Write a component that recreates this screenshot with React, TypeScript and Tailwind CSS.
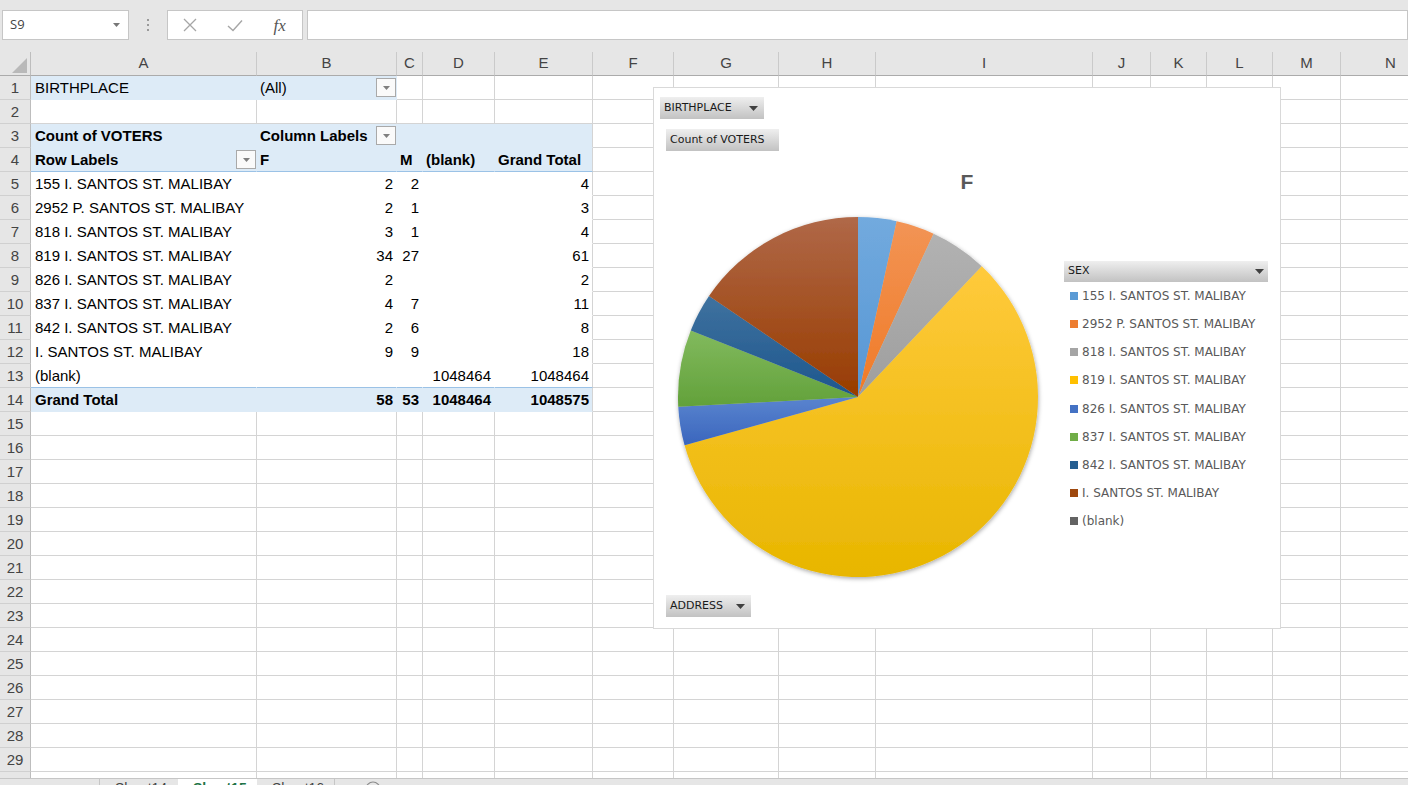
import React from 'react';

type ColDef = { k: string; w: string };
const COLS: ColDef[] = [
  { k: 'A', w: 'w-[226px]' },
  { k: 'B', w: 'w-[140px]' },
  { k: 'C', w: 'w-[26px]' },
  { k: 'D', w: 'w-[72px]' },
  { k: 'E', w: 'w-[98px]' },
  { k: 'F', w: 'w-[81px]' },
  { k: 'G', w: 'w-[105px]' },
  { k: 'H', w: 'w-[97px]' },
  { k: 'I', w: 'w-[217px]' },
  { k: 'J', w: 'w-[58px]' },
  { k: 'K', w: 'w-[56px]' },
  { k: 'L', w: 'w-[66px]' },
  { k: 'M', w: 'w-[68px]' },
  { k: 'N', w: 'w-[100px]' },
];

const PIVOT: string[][] = [
  ['155 I. SANTOS ST. MALIBAY', '2', '2', '', '4'],
  ['2952 P. SANTOS ST. MALIBAY', '2', '1', '', '3'],
  ['818 I. SANTOS ST. MALIBAY', '3', '1', '', '4'],
  ['819 I. SANTOS ST. MALIBAY', '34', '27', '', '61'],
  ['826 I. SANTOS ST. MALIBAY', '2', '', '', '2'],
  ['837 I. SANTOS ST. MALIBAY', '4', '7', '', '11'],
  ['842 I. SANTOS ST. MALIBAY', '2', '6', '', '8'],
  ['I. SANTOS ST. MALIBAY', '9', '9', '', '18'],
  ['(blank)', '', '', '1048464', '1048464'],
];
const TOTAL = ['Grand Total', '58', '53', '1048464', '1048575'];
const HEAD4 = ['Row Labels', 'F', 'M', '(blank)', 'Grand Total'];

const LEGEND = [
  { label: '155 I. SANTOS ST. MALIBAY', sq: 'bg-[#5b9bd5]' },
  { label: '2952 P. SANTOS ST. MALIBAY', sq: 'bg-[#ed7d31]' },
  { label: '818 I. SANTOS ST. MALIBAY', sq: 'bg-[#a5a5a5]' },
  { label: '819 I. SANTOS ST. MALIBAY', sq: 'bg-[#ffc000]' },
  { label: '826 I. SANTOS ST. MALIBAY', sq: 'bg-[#4472c4]' },
  { label: '837 I. SANTOS ST. MALIBAY', sq: 'bg-[#70ad47]' },
  { label: '842 I. SANTOS ST. MALIBAY', sq: 'bg-[#255e91]' },
  { label: 'I. SANTOS ST. MALIBAY', sq: 'bg-[#9e480e]' },
  { label: '(blank)', sq: 'bg-[#636363]' },
];

const SLICES: { v: number; top: string; bot: string }[] = [
  { v: 2, top: '#72aade', bot: '#5696d4' },
  { v: 2, top: '#f29455', bot: '#f07a26' },
  { v: 3, top: '#b2b2b2', bot: '#9e9e9e' },
  { v: 34, top: '#ffca3c', bot: '#e8b600' },
  { v: 2, top: '#5a84cf', bot: '#3a66bd' },
  { v: 4, top: '#82ba5e', bot: '#62a13a' },
  { v: 2, top: '#3f729f', bot: '#1d568d' },
  { v: 9, top: '#b06848', bot: '#983c00' },
];

function DD() {
  return (
    <div className="w-[20px] h-[19px] shrink-0 border border-[#a9a9a9] bg-[#fafafa] flex items-center justify-center">
      <svg width="7" height="4" viewBox="0 0 7 4">
        <polygon points="0,0 7,0 3.5,4" fill="#7f7f7f" />
      </svg>
    </div>
  );
}

function Tri({ color = '#404040' }: { color?: string }) {
  return (
    <svg width="9" height="5" viewBox="0 0 9 5" className="shrink-0">
      <polygon points="0,0 9,0 4.5,5" fill={color} />
    </svg>
  );
}

function TopBar() {
  return (
    <div className="h-[52px] shrink-0 bg-[#e6e6e6] flex items-start pt-[10px]">
      <div className="ml-[2px] w-[127px] h-[30px] bg-white border border-[#c6c6c6] flex items-center justify-between pl-[7px] pr-[8px]">
        <span className="text-[13px] text-[#444] font-['Open_Sans',sans-serif]">S9</span>
        <svg width="7" height="4" viewBox="0 0 7 4">
          <polygon points="0,0 7,0 3.5,4" fill="#777" />
        </svg>
      </div>
      <div className="w-[38px] h-[30px] flex flex-col items-center justify-center gap-[3px]">
        <div className="w-[2px] h-[2px] bg-[#9a9a9a]" />
        <div className="w-[2px] h-[2px] bg-[#9a9a9a]" />
        <div className="w-[2px] h-[2px] bg-[#9a9a9a]" />
      </div>
      <div className="w-[136px] h-[30px] bg-white border border-[#c6c6c6] flex items-center">
        <div className="w-[45px] flex justify-center">
          <svg width="14" height="14" viewBox="0 0 14 14">
            <path d="M1 1 L13 13 M13 1 L1 13" stroke="#a6a6a6" strokeWidth="1.3" fill="none" />
          </svg>
        </div>
        <div className="w-[45px] flex justify-center">
          <svg width="16" height="13" viewBox="0 0 16 13">
            <path d="M1 7 L6 11.5 L15 1.5" stroke="#a6a6a6" strokeWidth="1.4" fill="none" />
          </svg>
        </div>
        <div className="w-[45px] flex justify-center">
          <span className="text-[17px] italic text-[#555] font-['Liberation_Serif',serif] leading-none">fx</span>
        </div>
      </div>
      <div className="ml-[4px] flex-1 h-[30px] bg-white border border-[#c6c6c6]" />
    </div>
  );
}

function ColHeader() {
  return (
    <div className="flex h-[24px] shrink-0 bg-[#e6e6e6]">
      <div className="w-[31px] shrink-0 flex items-end justify-end pr-[3px] pb-[2px] border-r border-r-[#bdbdbd] border-b border-b-[#ababab]">
        <svg width="15" height="15" viewBox="0 0 15 15">
          <polygon points="15,0 15,15 0,15" fill="#b9b9b9" />
        </svg>
      </div>
      {COLS.map((c) => (
        <div
          key={c.k}
          className={`${c.w} shrink-0 flex items-center justify-center border-r border-r-[#cacaca] border-b border-b-[#ababab] text-[15px] text-[#444]`}
        >
          {c.k}
        </div>
      ))}
    </div>
  );
}

function Cell({ n, i, w }: { n: number; i: number; w: string }) {
  let bg = 'bg-white';
  let br = 'border-r-[#d4d4d4]';
  let bb = 'border-b-[#d4d4d4]';
  let content: React.ReactNode = null;
  let align = 'justify-start pl-[3px]';
  let bold = '';

  if (i <= 4) {
    if (n === 1 && i <= 1) {
      bg = 'bg-[#ddebf7]';
      br = 'border-r-[#ddebf7]';
      bb = 'border-b-[#ddebf7]';
      if (i === 0) {
        content = 'BIRTHPLACE';
        align = 'justify-start pl-[4px]';
      } else {
        content = (
          <>
            <span>(All)</span>
            <DD />
          </>
        );
        align = 'justify-between pl-[3px]';
      }
    } else if (n >= 3 && n <= 14) {
      const blue = n === 3 || n === 4 || n === 14;
      bg = blue ? 'bg-[#ddebf7]' : 'bg-white';
      br = i === 4 ? 'border-r-[#d4d4d4]' : blue ? 'border-r-[#ddebf7]' : 'border-r-white';
      bb = n === 4 || n === 13 ? 'border-b-[#9bc2e6]' : blue ? 'border-b-[#ddebf7]' : 'border-b-white';
      if (n === 3) {
        bold = 'font-bold';
        if (i === 0) {
          content = 'Count of VOTERS';
          align = 'justify-start pl-[4px]';
        } else if (i === 1) {
          content = (
            <>
              <span>Column Labels</span>
              <DD />
            </>
          );
          align = 'justify-between pl-[3px]';
        }
      } else if (n === 4) {
        bold = 'font-bold';
        if (i === 0) {
          content = (
            <>
              <span>Row Labels</span>
              <DD />
            </>
          );
          align = 'justify-between pl-[4px]';
        } else {
          content = HEAD4[i];
          align = 'justify-start pl-[3px]';
        }
      } else {
        const data = n === 14 ? TOTAL : PIVOT[n - 5];
        if (n === 14) bold = 'font-bold';
        content = data[i];
        align = i === 0 ? 'justify-start pl-[4px]' : 'justify-end pr-[3px]';
      }
    }
  }

  return (
    <div
      className={`${w} shrink-0 h-full flex items-center overflow-hidden whitespace-nowrap border-r border-b text-[15px] text-black leading-none ${bg} ${br} ${bb} ${align} ${bold}`}
    >
      {content}
    </div>
  );
}

function Row({ n }: { n: number }) {
  return (
    <div className="flex h-[24px] shrink-0">
      <div className="w-[31px] shrink-0 h-full flex items-center justify-center bg-[#e6e6e6] border-r border-r-[#bdbdbd] border-b border-b-[#d0d0d0] text-[15px] text-[#444] leading-none">
        {n}
      </div>
      {COLS.map((c, i) => (
        <Cell key={c.k} n={n} i={i} w={c.w} />
      ))}
    </div>
  );
}

function Tabs() {
  return (
    <div className="h-[7px] shrink-0 flex overflow-hidden bg-[#e6e6e6] border-t border-t-[#c6c6c6] text-[14px] leading-[14px]">
      <div className="w-[100px] shrink-0 border-r border-r-[#c6c6c6]" />
      <div className="w-[78px] shrink-0 pl-[15px] pt-[2px] text-[#444]">Sheet14</div>
      <div className="w-[79px] shrink-0 pl-[15px] pt-[2px] bg-white text-[#217346] font-bold">Sheet15</div>
      <div className="w-[78px] shrink-0 pl-[15px] pt-[2px] text-[#444] border-r border-r-[#c6c6c6]">Sheet16</div>
      <div className="w-[30px] shrink-0" />
      <div className="pt-[2px]">
        <svg width="16" height="16" viewBox="0 0 16 16">
          <circle cx="8" cy="8" r="7" stroke="#8a8a8a" strokeWidth="1.2" fill="none" />
        </svg>
      </div>
    </div>
  );
}

function ChartButton({ label, w, tri = true }: { label: string; w: string; tri?: boolean }) {
  return (
    <div
      className={`${w} h-[22px] flex items-center justify-between pl-[4px] pr-[6px] bg-linear-to-b from-[#efefef] to-[#c2c2c2] text-[11px] text-[#1a1a1a] font-['DejaVu_Sans',sans-serif] whitespace-nowrap`}
    >
      <span>{label}</span>
      {tri && <Tri />}
    </div>
  );
}

function Pie() {
  const total = SLICES.reduce((s, x) => s + x.v, 0);
  const cx = 200;
  const cy = 200;
  const r = 180;
  let a = 0;
  const paths = SLICES.map((s, i) => {
    const a0 = a;
    const a1 = a + (s.v / total) * Math.PI * 2;
    a = a1;
    const x0 = cx + r * Math.sin(a0);
    const y0 = cy - r * Math.cos(a0);
    const x1 = cx + r * Math.sin(a1);
    const y1 = cy - r * Math.cos(a1);
    const large = a1 - a0 > Math.PI ? 1 : 0;
    return (
      <path
        key={i}
        d={`M${cx},${cy} L${x0},${y0} A${r},${r} 0 ${large} 1 ${x1},${y1} Z`}
        fill={`url(#pg${i})`}
      />
    );
  });
  return (
    <svg width="400" height="400" viewBox="0 0 400 400">
      <defs>
        {SLICES.map((s, i) => (
          <linearGradient key={i} id={`pg${i}`} x1="0" y1="0" x2="0" y2="1">
            <stop offset="0" stopColor={s.top} />
            <stop offset="1" stopColor={s.bot} />
          </linearGradient>
        ))}
        <filter id="pshadow" x="-10%" y="-10%" width="120%" height="120%">
          <feDropShadow dx="0.5" dy="1.5" stdDeviation="2" floodColor="#000" floodOpacity="0.35" />
        </filter>
      </defs>
      <g filter="url(#pshadow)">{paths}</g>
    </svg>
  );
}

function Chart() {
  return (
    <div className="absolute left-[653px] top-[87px] w-[628px] h-[542px] bg-white border border-[#d9d9d9]">
      <div className="absolute left-[6px] top-[9px]">
        <ChartButton label="BIRTHPLACE" w="w-[104px]" />
      </div>
      <div className="absolute left-[12px] top-[41px]">
        <ChartButton label="Count of VOTERS" w="w-[113px]" tri={false} />
      </div>
      <div className="absolute left-0 right-0 top-[83px] text-center text-[21px] font-bold text-[#595959] leading-none">
        F
      </div>
      <div className="absolute left-[4px] top-[109px]">
        <Pie />
      </div>
      <div className="absolute left-[410px] top-[173px] flex flex-col">
        <div className="w-[204px] h-[21px] flex items-center justify-between pl-[4px] pr-[4px] bg-linear-to-b from-[#efefef] to-[#c2c2c2] text-[11px] text-[#1a1a1a] font-['DejaVu_Sans',sans-serif]">
          <span>SEX</span>
          <Tri />
        </div>
        {LEGEND.map((l) => (
          <div key={l.label} className="h-[28.125px] flex items-center pl-[6px] gap-[4px]">
            <div className={`w-[8px] h-[8px] ${l.sq}`} />
            <span className="text-[12px] text-[#595959] font-['DejaVu_Sans',sans-serif] whitespace-nowrap">{l.label}</span>
          </div>
        ))}
      </div>
      <div className="absolute left-[12px] top-[507px]">
        <ChartButton label="ADDRESS" w="w-[85px]" />
      </div>
    </div>
  );
}

export default function App() {
  const rows = Array.from({ length: 30 }, (_, k) => k + 1);
  return (
    <div className="relative w-[1408px] h-[785px] overflow-hidden bg-white flex flex-col font-['Liberation_Sans',Arial,sans-serif]">
      <TopBar />
      <ColHeader />
      <div className="h-[702px] shrink-0 overflow-hidden flex flex-col">
        {rows.map((n) => (
          <Row key={n} n={n} />
        ))}
      </div>
      <Tabs />
      <Chart />
    </div>
  );
}
